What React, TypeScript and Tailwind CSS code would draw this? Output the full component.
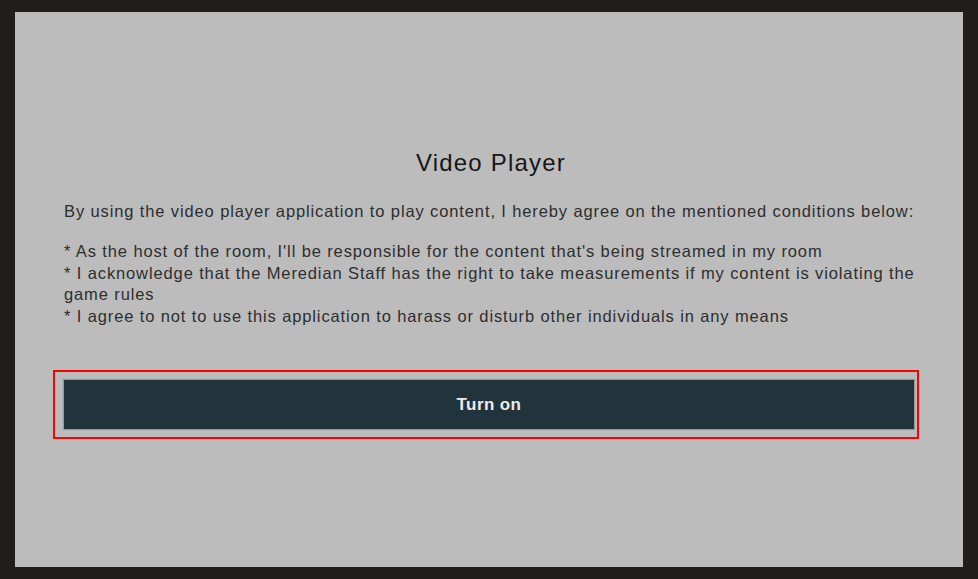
export default function App() {
  return (
    <div className="w-[978px] h-[579px] bg-[#201e1d] pt-[12px] pl-[15px]" style={{ fontFamily: '"Liberation Sans", Arial, sans-serif' }}>
      <div className="w-[948px] h-[555px] bg-[#bcbcbc] flex flex-col items-start pt-[134px] pl-[49px]">
        <div className="w-[854px] text-center text-[24px] leading-[34px] text-[#161616] tracking-[1.2px]">Video Player</div>
        <div className="w-[858px] mt-[21px] text-[16.5px] leading-[21.5px] text-[#2e2e2e] tracking-[0.88px]">
          <p>By using the video player application to play content, I hereby agree on the mentioned conditions below:</p>
          <p className="h-[18.5px]"></p>
          <p>* As the host of the room, I'll be responsible for the content that's being streamed in my room</p>
          <p>* I acknowledge that the Meredian Staff has the right to take measurements if my content is violating the game rules</p>
          <p>* I agree to not to use this application to harass or disturb other individuals in any means</p>
        </div>
        <div className="mt-[42.75px] -ml-[11px] w-[866px] h-[69px] border-2 border-[#ff0000] pt-[8px] pb-[8px] pl-[9px] pr-[3px]">
          <div className="h-full bg-[#21333b] flex items-center justify-center shadow-[0_0_1px_1px_rgba(120,130,135,0.6)]">
            <span className="text-[17px] font-bold text-[#ececec] tracking-[0.4px]">Turn on</span>
          </div>
        </div>
      </div>
    </div>
  );
}
